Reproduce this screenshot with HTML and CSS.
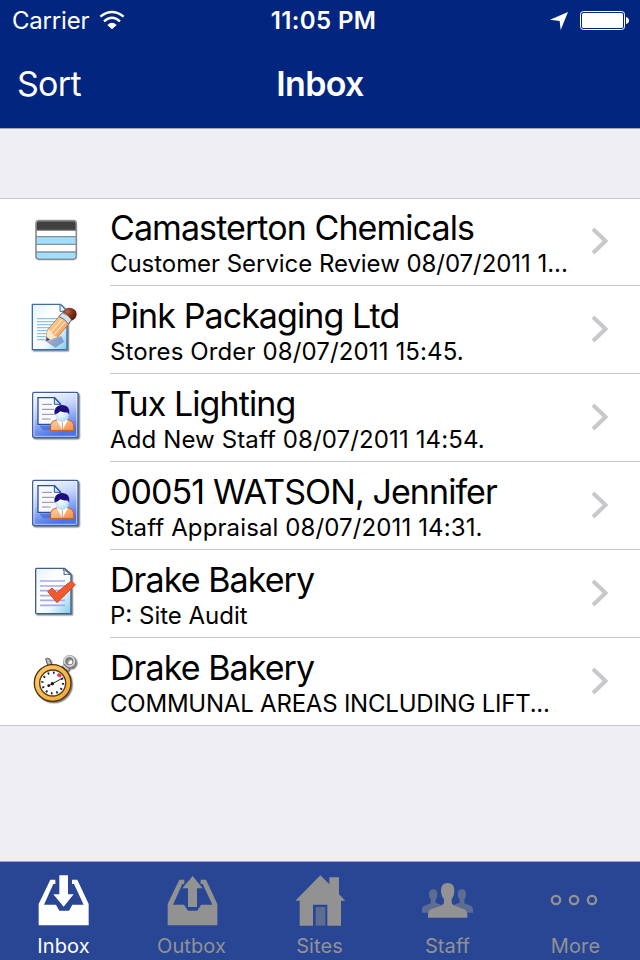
FILE: index.html
```html
<!DOCTYPE html>
<html lang="en">
<head>
    <meta charset="UTF-8">
    <meta name="viewport" content="width=device-width, initial-scale=1.0">
    <title>Inbox</title>
    <link rel="stylesheet" href="styles.css">
</head>
<body>
    <!-- Shared drawing used by both staff rows -->
    <svg class="defs" width="0" height="0">
        <defs>
            <linearGradient id="page" x1="0" y1="0" x2="1" y2="1">
                <stop offset="0" stop-color="#e4f3fc"/>
                <stop offset="0.4" stop-color="#fff"/>
                <stop offset="0.65" stop-color="#eef9fd"/>
                <stop offset="1" stop-color="#7cc8ea"/>
            </linearGradient>
            <linearGradient id="tile" x1="0" y1="0" x2="0.3" y2="1">
                <stop offset="0" stop-color="#fff"/>
                <stop offset="0.45" stop-color="#c4d4fb"/>
                <stop offset="1" stop-color="#4a74ea"/>
            </linearGradient>
            <linearGradient id="shirt" x1="0" y1="0" x2="1" y2="1">
                <stop offset="0" stop-color="#ffd9b0"/>
                <stop offset="1" stop-color="#f58b3c"/>
            </linearGradient>
            <linearGradient id="wood" x1="0" y1="0" x2="1" y2="1">
                <stop offset="0" stop-color="#ffe2b5"/>
                <stop offset="1" stop-color="#ee8b38"/>
            </linearGradient>
            <linearGradient id="gold" x1="0" y1="0" x2="1" y2="1">
                <stop offset="0" stop-color="#ffcf70"/>
                <stop offset="1" stop-color="#f0a332"/>
            </linearGradient>
            <radialGradient id="eraser" cx="0.35" cy="0.3" r="0.75">
                <stop offset="0" stop-color="#b66a4a"/>
                <stop offset="0.5" stop-color="#80301a"/>
                <stop offset="1" stop-color="#54180a"/>
            </radialGradient>
            <radialGradient id="face" cx="0.4" cy="0.3" r="0.8">
                <stop offset="0" stop-color="#fff"/>
                <stop offset="1" stop-color="#a9d4f5"/>
            </radialGradient>
            <filter id="shadow" x="-20%" y="-20%" width="150%" height="150%">
                <feDropShadow dx="4" dy="4" stdDeviation="2" flood-color="#000" flood-opacity="0.5"/>
            </filter>
        </defs>
        <symbol id="staff-form" viewBox="0 0 210 210">
            <rect x="38" y="34" width="136" height="136" rx="5" fill="url(#tile)" stroke="#3f5f9f" stroke-width="4" filter="url(#shadow)"/>
            <rect x="42" y="38" width="128" height="128" rx="3" fill="none" stroke="#fff" stroke-opacity="0.6" stroke-width="3"/>
            <path d="M58 134h36v14H70z" fill="#1d3c9c" opacity="0.35"/>
            <path d="M54 50h50l18 20v60H54z" fill="#f8faff" stroke="#2c4fa0" stroke-width="4"/>
            <path d="M103 51v19h18z" fill="#c9e5fb" stroke="#2c4fa0" stroke-width="3"/>
            <path d="M66 70h30M66 85h36M66 100h36M66 114h26" stroke="#8c8c96" stroke-width="3"/>
            <path d="M92 149v-18q2-10 16-14l18-3 20 3q14 4 15 16v16z" fill="url(#shirt)" stroke="#ce5a17" stroke-width="3"/>
            <path d="M110 116l17 32 17-32z" fill="#fff"/>
            <path d="M127 124v24" stroke="#b2652e" stroke-width="2"/>
            <circle cx="126" cy="103" r="20" fill="url(#face)"/>
            <path d="M104 101q-5-27 23-29 24 1 21 28l-7-6q-12 1-20-3-8 8-17 10z" fill="#1d0b80"/>
        </symbol>
    </svg>

    <div class="screen">
        <header class="header">
            <div class="status-bar">
                <div class="status-left">
                    <span class="carrier">Carrier</span>
                    <svg width="26" height="20" viewBox="0 0 78 60">
                        <path d="M4 20Q39-8 74 20M15 34Q39 12 63 34" fill="none" stroke="#fff" stroke-width="7"/>
                        <path d="M25 45Q39 31 53 45L39 58z" fill="#fff"/>
                    </svg>
                </div>
                <span class="time">11:05 PM</span>
                <div class="status-right">
                    <svg class="location" width="18" height="18" viewBox="0 0 54 54">
                        <path d="M54 0L32 54 29 27 0 23z" fill="#fff"/>
                    </svg>
                    <svg width="49" height="19" viewBox="0 0 49 19">
                        <rect x="0.5" y="0.5" width="44" height="18" rx="2.8" fill="none" stroke="#fff"/>
                        <rect x="2" y="2" width="41" height="15" rx="1.5" fill="#fff"/>
                        <path d="M46 6q3 1 3 3.5T46 13z" fill="#fff"/>
                    </svg>
                </div>
            </div>
            <div class="nav-bar">
                <span class="sort">Sort</span>
                <h1>Inbox</h1>
            </div>
        </header>

        <main class="content">
            <ul class="list">
                <li class="row">
                    <svg class="row-icon" viewBox="0 0 210 210">
                        <rect x="48" y="47" width="121" height="116" rx="9" fill="#fff"/>
                        <path d="M48 75V56q0-9 9-9h103q9 0 9 9v19z" fill="#404040"/>
                        <path d="M48 95h121v24H48zM48 141h121v13q0 9-9 9H57q-9 0-9-9z" fill="#a0dfff"/>
                        <path d="M48 76h121M48 95h121M48 118h121M48 141h121" stroke="#8b8e91" stroke-width="4"/>
                        <rect x="48" y="47" width="121" height="116" rx="9" fill="none" stroke="#8b8e91" stroke-width="5"/>
                    </svg>
                    <div class="row-text">
                        <div class="title">Camasterton Chemicals</div>
                        <div class="subtitle long">Customer Service Review 08/07/2011 1...</div>
                    </div>
                    <svg class="chevron" viewBox="0 0 18 28"><path d="M2 2l12.5 12L2 26"/></svg>
                </li>
                <li class="row">
                    <svg class="row-icon" viewBox="0 0 210 210">
                        <path d="M37 34h85l19 20v116H37z" fill="url(#page)" stroke="#3d6ea5" stroke-width="4" filter="url(#shadow)"/>
                        <path d="M120 34v21h21z" fill="#eaf6ff" stroke="#3d6ea5" stroke-width="3"/>
                        <path d="M51 77h63M51 86h56M51 95h48M51 104h41M51 113h35M51 122h32M51 131h29M51 140h26" stroke="#8cc3e8" stroke-width="4"/>
                        <path d="M80 147l26 17 26-18-8-17z" fill="#4a5aa8" opacity="0.5"/>
                        <path d="M78 145l5-35 39-45 30 21-39 46z" fill="url(#wood)" stroke="#a9602a" stroke-width="2"/>
                        <path d="M83 110l12 5 4 11 14 6-35 13z" fill="#ffe8c8"/>
                        <path d="M95 115l39-44M102 125l41-46" stroke="#fff" stroke-width="3" opacity="0.8"/>
                        <path d="M78 145l2-13 10 8z" fill="#3d3f88"/>
                        <path d="M117 71l10-12q16 4 28 21l-10 13q-9-15-28-22z" fill="#d6e0e8" stroke="#5d7084" stroke-width="3"/>
                        <path d="M127 58q7-14 22-14 20 2 21 19 0 14-15 20-8-18-28-25z" fill="url(#eraser)"/>
                    </svg>
                    <div class="row-text">
                        <div class="title">Pink Packaging Ltd</div>
                        <div class="subtitle">Stores Order 08/07/2011 15:45.</div>
                    </div>
                    <svg class="chevron" viewBox="0 0 18 28"><path d="M2 2l12.5 12L2 26"/></svg>
                </li>
                <li class="row">
                    <svg class="row-icon" viewBox="0 0 210 210"><use href="#staff-form"/></svg>
                    <div class="row-text">
                        <div class="title">Tux Lighting</div>
                        <div class="subtitle">Add New Staff 08/07/2011 14:54.</div>
                    </div>
                    <svg class="chevron" viewBox="0 0 18 28"><path d="M2 2l12.5 12L2 26"/></svg>
                </li>
                <li class="row">
                    <svg class="row-icon" viewBox="0 0 210 210"><use href="#staff-form"/></svg>
                    <div class="row-text">
                        <div class="title">00051 WATSON, Jennifer</div>
                        <div class="subtitle">Staff Appraisal 08/07/2011 14:31.</div>
                    </div>
                    <svg class="chevron" viewBox="0 0 18 28"><path d="M2 2l12.5 12L2 26"/></svg>
                </li>
                <li class="row">
                    <svg class="row-icon" viewBox="0 0 210 210">
                        <path d="M50 34h84l19 18v118H50q-3 0-3-3V37q0-3 3-3z" fill="url(#page)" stroke="#425d86" stroke-width="4" filter="url(#shadow)"/>
                        <path d="M130 36q4 8 2 17 10-3 20 0z" fill="#fff" stroke="#425d86" stroke-width="3"/>
                        <path d="M60 72h75M60 87h75M60 101h75M60 116h75M60 130h75M60 145h75" stroke="#a6abe2" stroke-width="5"/>
                        <path d="M83 104l13-11 14 14 43-35 13 11-55 54z" fill="#ef5a30" stroke="#d64a22" stroke-width="3" stroke-linejoin="round"/>
                    </svg>
                    <div class="row-text">
                        <div class="title">Drake Bakery</div>
                        <div class="subtitle short">P: Site Audit</div>
                    </div>
                    <svg class="chevron" viewBox="0 0 18 28"><path d="M2 2l12.5 12L2 26"/></svg>
                </li>
                <li class="row">
                    <svg class="row-icon" viewBox="0 0 210 210">
                        <g filter="url(#shadow)">
                            <circle cx="149" cy="50" r="14" fill="none" stroke="#777" stroke-width="12"/>
                            <circle cx="148" cy="49" r="15" fill="none" stroke="#d5d5d5" stroke-width="6"/>
                            <path d="M128 61l17 14" stroke="#555" stroke-width="12"/>
                            <path d="M128 60l17 14" stroke="#ccc" stroke-width="6"/>
                            <path d="M77 42q5-5 12 0l6 17-11 4z" fill="#bbb" stroke="#555" stroke-width="3"/>
                            <circle cx="98" cy="114" r="55" fill="url(#gold)" stroke="#51300d" stroke-width="4"/>
                        </g>
                        <circle cx="98" cy="114" r="39" fill="#fff" stroke="#5b3a17" stroke-width="4"/>
                        <circle cx="98" cy="114" r="31" fill="none" stroke="#222" stroke-width="7" stroke-dasharray="5 11.23"/>
                        <path d="M112 89l12 4" stroke="#e8385a" stroke-width="9"/>
                        <path d="M85 123l45-25" stroke="#222" stroke-width="3"/>
                        <circle cx="97" cy="116" r="5" fill="#111"/>
                        <circle cx="86" cy="122" r="4" fill="#111"/>
                    </svg>
                    <div class="row-text">
                        <div class="title">Drake Bakery</div>
                        <div class="subtitle caps">COMMUNAL AREAS INCLUDING LIFT...</div>
                    </div>
                    <svg class="chevron" viewBox="0 0 18 28"><path d="M2 2l12.5 12L2 26"/></svg>
                </li>
            </ul>
        </main>

        <nav class="tab-bar">
            <div class="tab active">
                <svg viewBox="0 36 384 210">
                    <path d="M116 226v-64l35-73h15v13h-6l-28 62h36l10 18h29l10-18h34l-29-62h-6V89h16l34 73v64z"/>
                    <path d="M178 76h26v57h17l-30 37-31-37h18z"/>
                </svg>
                <span>Inbox</span>
            </div>
            <div class="tab">
                <svg viewBox="384 36 384 210">
                    <path d="M503 226v-64l35-73h15v13h-6l-28 62h33l12 18h28l11-18h34l-29-62h-6V89h16l34 73v64z"/>
                    <path d="M564 171h27v-56h17l-30-37-31 37h17z"/>
                </svg>
                <span>Outbox</span>
            </div>
            <div class="tab">
                <svg viewBox="48 36 384 210">
                    <path d="M166 152l75-76 27 27V82h29v51l19 19h-13v75h-41v-63h-43v63h-40v-75z"/>
                    <path class="faded" d="M227 171h29v56h-29z"/>
                </svg>
                <span>Sites</span>
            </div>
            <div class="tab">
                <svg viewBox="432 36 384 210">
                    <path class="faded" d="M546 188v-11q1-8 12-11l14-6v-11q-5-6-5-17 0-14 13-14 12 0 12 14 0 11-5 17v9l18 7-26 12q-9 4-12 11zM699 188v-11q-1-8-11-11l-15-6v-11q5-6 5-17 0-14-12-14-13 0-13 14 0 11 6 17v9l-19 7 26 12q9 4 12 11z"/>
                    <path d="M564 203v-9q0-12 10-16l31-12q7-3 7-9v-9q-9-10-9-27 0-22 20-22t20 22q0 17-8 27v9q0 6 7 9l30 12q10 4 10 16v9z"/>
                </svg>
                <span>Staff</span>
            </div>
            <div class="tab">
                <svg viewBox="216 36 384 210">
                    <g class="dots">
                        <circle cx="348" cy="150" r="12.5"/>
                        <circle cx="402" cy="150" r="12.5"/>
                        <circle cx="456" cy="150" r="12.5"/>
                    </g>
                </svg>
                <span>More</span>
            </div>
        </nav>
    </div>
</body>
</html>
```
FILE: styles.css
```css
* {
    box-sizing: border-box;
}
body {
    margin: 0;
    font-family: Inter, "Liberation Sans", sans-serif;
    background-color: #efeef4;
    color: #000;
}
svg {
    display: block;
    flex: none;
}
.defs {
    position: absolute;
}
.screen {
    width: 640px;
    height: 960px;
    display: flex;
    flex-direction: column;
    overflow: hidden;
}
.header {
    height: 129px;
    background-color: #02267f;
    border-bottom: 1px solid #a5a5aa;
    color: #fff;
}
.status-bar,
.nav-bar {
    display: grid;
    grid-template-columns: 1fr auto 1fr;
    align-items: center;
}
.status-bar {
    height: 40px;
    padding: 0 11px 0 12px;
    font-size: 24px;
}
.status-left,
.status-right {
    display: flex;
    align-items: center;
}
.status-left {
    gap: 10px;
}
.status-right {
    justify-content: flex-end;
    gap: 12px;
}
.carrier {
    letter-spacing: -0.2px;
}
.time {
    padding: 1px 0 0 6px;
    font-weight: 600;
    letter-spacing: 0.4px;
}
.location {
    margin-top: 2px;
}
.nav-bar {
    height: 87px;
    padding: 0 18px;
    font-size: 34px;
    letter-spacing: -0.7px;
}
.sort {
    margin-left: -1px;
}
h1 {
    margin: 0;
    font-size: 34px;
    font-weight: 600;
}
.content {
    flex: 1;
    padding-top: 69px;
}
.list {
    list-style: none;
    margin: 0;
    padding: 0;
    background-color: #fff;
    box-shadow: inset 0 1px #c8c7cc, inset 0 -1px #c8c7cc;
}
.row {
    display: flex;
    height: 88px;
    padding-left: 20px;
}
.row-icon {
    width: 70px;
    height: 70px;
    margin-top: 7px;
}
.row-text {
    flex: 1;
    margin-left: 20px;
    padding-top: 10px;
    border-bottom: 1px solid #c8c7cc;
    white-space: nowrap;
}
.title {
    font-size: 34px;
    line-height: 40px;
    letter-spacing: -0.92px;
}
.subtitle {
    font-size: 24px;
    line-height: 32px;
    letter-spacing: 0.12px;
}
.subtitle.long {
    letter-spacing: -0.05px;
}
.subtitle.short {
    letter-spacing: 0;
}
.subtitle.caps {
    letter-spacing: -0.22px;
}
.chevron {
    width: 50px;
    height: 88px;
    padding: 29px 31px 30px 1px;
    border-bottom: 1px solid #c8c7cc;
    fill: none;
    stroke: #c7c7cc;
    stroke-width: 4;
}
.tab-bar {
    display: flex;
    height: 99px;
    background-color: #284694;
    border-top: 1px solid #a5a7ae;
}
.tab {
    width: 128px;
    padding-right: 1px;
    color: #929292;
    font-size: 20px;
    line-height: 28px;
    letter-spacing: 0.1px;
    text-align: center;
}
.tab svg {
    width: 128px;
    height: 70px;
    fill: #929292;
}
.tab.active {
    color: #fff;
}
.tab.active svg {
    fill: #fff;
}
.tab .faded {
    opacity: 0.5;
}
.tab .dots {
    fill: none;
    stroke: #929292;
    stroke-width: 7;
}
```
